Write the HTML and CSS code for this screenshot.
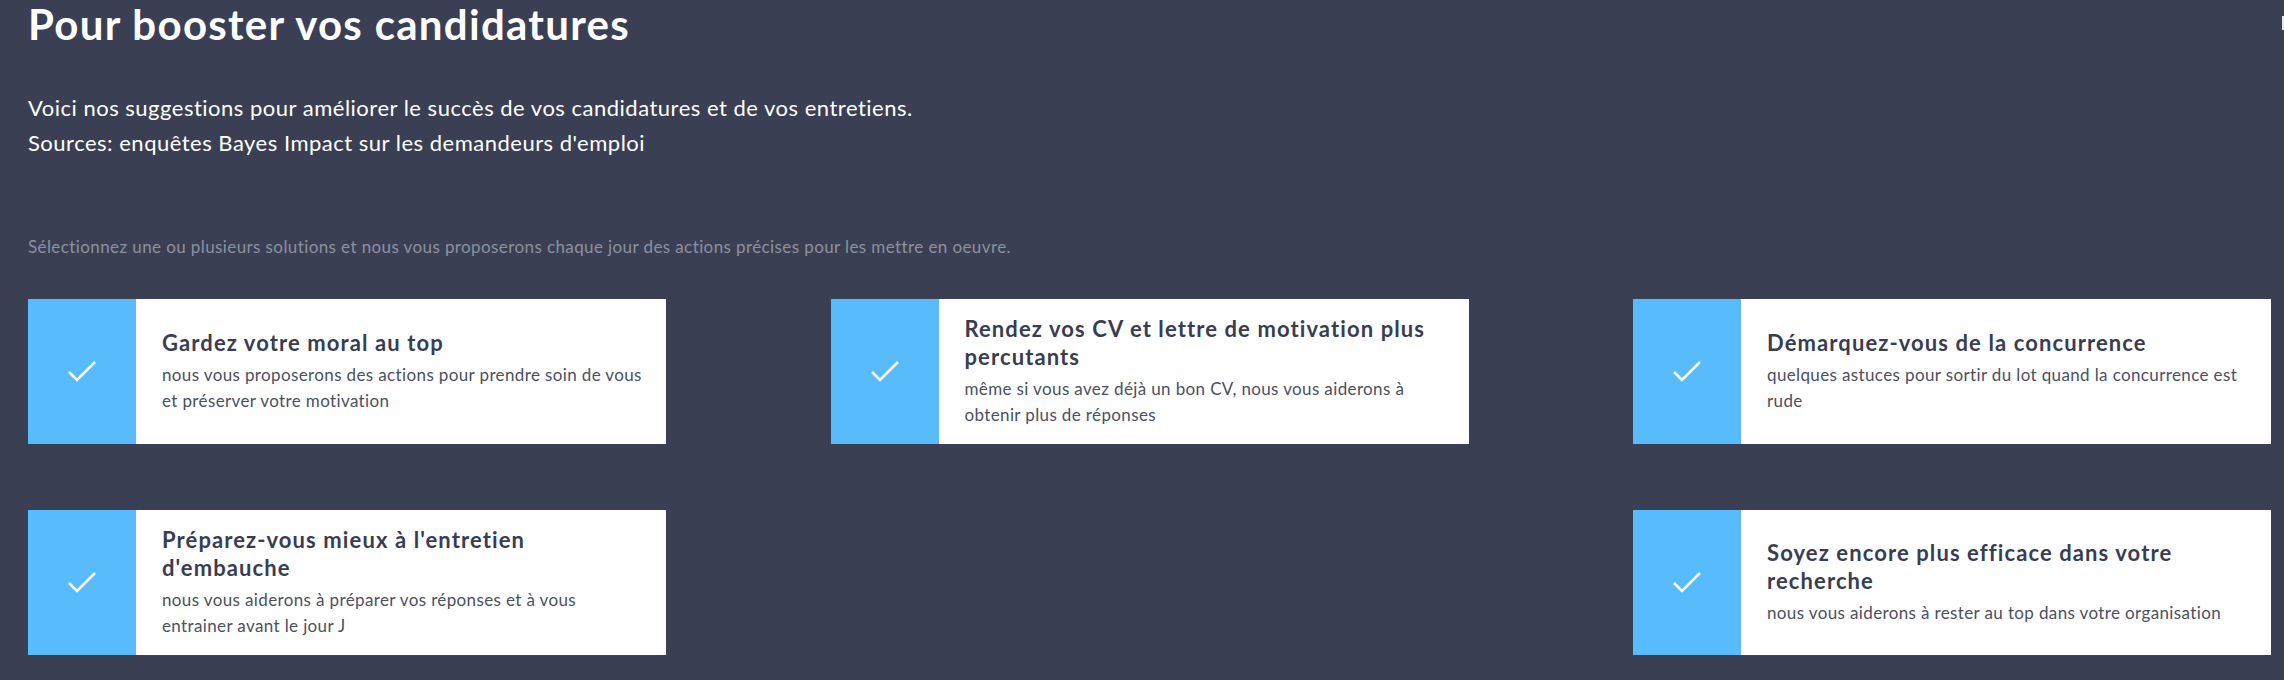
FILE: index.html
```html
<!DOCTYPE html>
<html lang="fr">
<head>
    <meta charset="UTF-8">
    <meta name="viewport" content="width=device-width, initial-scale=1.0">
    <title>Pour booster vos candidatures</title>
    <link rel="stylesheet" href="styles.css">
</head>
<body>
    <span class="edge-tab"></span>

    <div class="page">
        <h1>Pour booster vos candidatures</h1>

        <p class="intro">
            Voici nos suggestions pour améliorer le succès de vos candidatures et de vos entretiens.<br>
            Sources: enquêtes Bayes Impact sur les demandeurs d'emploi
        </p>

        <p class="hint">Sélectionnez une ou plusieurs solutions et nous vous proposerons chaque jour des actions précises pour les mettre en oeuvre.</p>

        <div class="solutions">
            <!-- Row 1 -->
            <div class="solution">
                <div class="solution-check">
                    <svg viewBox="0 0 30 22" width="30" height="22"><path d="M2 11l8 8L28 1" fill="none" stroke="#fff" stroke-width="2.5"/></svg>
                </div>
                <div class="solution-text">
                    <div class="solution-title">Gardez votre moral au top</div>
                    <div class="solution-desc">nous vous proposerons des actions pour prendre soin de vous et préserver votre motivation</div>
                </div>
            </div>

            <div class="solution">
                <div class="solution-check">
                    <svg viewBox="0 0 30 22" width="30" height="22"><path d="M2 11l8 8L28 1" fill="none" stroke="#fff" stroke-width="2.5"/></svg>
                </div>
                <div class="solution-text">
                    <div class="solution-title">Rendez vos CV et lettre de motivation plus percutants</div>
                    <div class="solution-desc">même si vous avez déjà un bon CV, nous vous aiderons à obtenir plus de réponses</div>
                </div>
            </div>

            <div class="solution">
                <div class="solution-check">
                    <svg viewBox="0 0 30 22" width="30" height="22"><path d="M2 11l8 8L28 1" fill="none" stroke="#fff" stroke-width="2.5"/></svg>
                </div>
                <div class="solution-text">
                    <div class="solution-title">Démarquez-vous de la concurrence</div>
                    <div class="solution-desc">quelques astuces pour sortir du lot quand la concurrence est rude</div>
                </div>
            </div>

            <!-- Row 2 -->
            <div class="solution">
                <div class="solution-check">
                    <svg viewBox="0 0 30 22" width="30" height="22"><path d="M2 11l8 8L28 1" fill="none" stroke="#fff" stroke-width="2.5"/></svg>
                </div>
                <div class="solution-text">
                    <div class="solution-title">Préparez-vous mieux à l'entretien d'embauche</div>
                    <div class="solution-desc">nous vous aiderons à préparer vos réponses et à vous entrainer avant le jour J</div>
                </div>
            </div>

            <div class="solution">
                <div class="solution-check">
                    <svg viewBox="0 0 30 22" width="30" height="22"><path d="M2 11l8 8L28 1" fill="none" stroke="#fff" stroke-width="2.5"/></svg>
                </div>
                <div class="solution-text">
                    <div class="solution-title">Soyez encore plus efficace dans votre recherche</div>
                    <div class="solution-desc">nous vous aiderons à rester au top dans votre organisation</div>
                </div>
            </div>
        </div>
    </div>
</body>
</html>
```

FILE: styles.css
```css
body {
    font-family: Lato, "Open Sans", sans-serif;
    margin: 0;
    padding: 0;
    background-color: #3a3f54;
    color: #ffffff;
    overflow: hidden;
}

.edge-tab {
    position: absolute;
    top: 16px;
    right: 0;
    width: 2px;
    height: 14px;
    background-color: #e6e8ef;
}

.page {
    width: 2243px;
    padding-left: 28px;
}

h1 {
    margin: 0;
    font-size: 42px;
    line-height: 48px;
    font-weight: bold;
    letter-spacing: 1.3px;
}

.intro {
    margin: 42px 0 0;
    font-size: 22px;
    line-height: 35px;
    letter-spacing: 0.5px;
}

.hint {
    margin: 75px 0 0;
    font-size: 17px;
    line-height: 24px;
    letter-spacing: 0.4px;
    color: #8c91a0;
}

.solutions {
    display: flex;
    flex-wrap: wrap;
    justify-content: space-between;
    row-gap: 66px;
    margin-top: 40px;
}

.solution {
    display: flex;
    width: 638px;
    height: 145px;
    background-color: #ffffff;
}

.solution-check {
    width: 108px;
    flex-shrink: 0;
    background-color: #58bbfb;
    display: flex;
    align-items: center;
    justify-content: center;
}

.solution-text {
    flex: 1;
    padding: 0 20px 0 26px;
    display: flex;
    flex-direction: column;
    justify-content: center;
}

.solution-title {
    color: #383d52;
    font-size: 22px;
    line-height: 28px;
    font-weight: bold;
    letter-spacing: 1.1px;
}

.solution-desc {
    margin-top: 5px;
    color: #4b5063;
    font-size: 17px;
    line-height: 26px;
    letter-spacing: 0.37px;
}
```
